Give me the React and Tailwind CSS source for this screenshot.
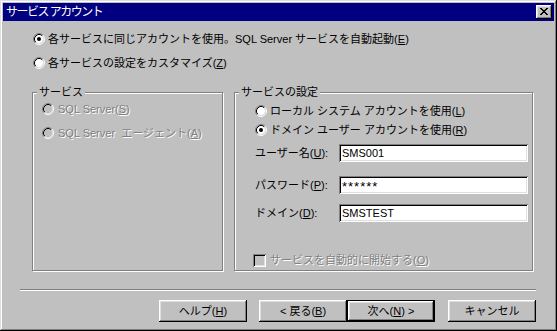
import React from 'react';

const raised = 'shadow-[inset_-1px_-1px_0_#000,inset_1px_1px_0_#fff,inset_-2px_-2px_0_#808080,inset_2px_2px_0_#dfdfdf]';
const sunken = 'shadow-[inset_1px_1px_0_#808080,inset_-1px_-1px_0_#fff,inset_2px_2px_0_#000,inset_-2px_-2px_0_#dfdfdf]';
const etched = 'border border-[#808080] shadow-[inset_1px_1px_0_#fff,1px_1px_0_#fff]';
const dim = 'text-[#808080] [text-shadow:1px_1px_0_#fff]';

const Radio = ({ checked, disabled }) => (
    <svg width="12" height="12" viewBox="0 0 12 12" className="shrink-0">
        <circle cx="6" cy="6" r="4.2" fill={disabled ? '#c0c0c0' : '#fff'} />
        <path d="M2.11 9.89A5.5 5.5 0 0 1 9.89 2.11" stroke="#808080" fill="none" />
        <path d="M9.89 2.11A5.5 5.5 0 0 1 2.11 9.89" stroke="#fff" fill="none" />
        <path d="M2.82 9.18A4.5 4.5 0 0 1 9.18 2.82" stroke="#000" fill="none" />
        <path d="M9.18 2.82A4.5 4.5 0 0 1 2.82 9.18" stroke="#dfdfdf" fill="none" />
        {checked && <circle cx="6" cy="6" r="2" fill={disabled ? '#808080' : '#000'} />}
    </svg>
);

// mnemonic letter
const K = ({ children }) => <span className="underline underline-offset-[1px]">{children}</span>;

const Group = ({ title, className, children }) => (
    <div className={`relative h-[179px] ${etched} ${className}`}>
        <span className="absolute left-[4px] top-[-8px] px-[2px] bg-[#c0c0c0] leading-[14px]">{title}</span>
        {children}
    </div>
);

const Field = ({ label, value, secret, className }) => (
    <div className={`flex items-center ${className}`}>
        <span className="w-[84px] leading-[14px]">{label}</span>
        <div className={`w-[189px] h-[18px] bg-white pl-[3px] flex items-center font-['Liberation_Sans',sans-serif] ${sunken} ${secret ? 'text-[13px] tracking-[1px] pt-[3px]' : 'text-[11px]'}`}>
            {value}
        </div>
    </div>
);

const Button = ({ children, isDefault, className }) => (
    <button className={`w-[88px] h-[22px] flex items-center justify-center bg-[#c0c0c0] leading-[14px] ${raised} ${isDefault ? 'border border-black' : ''} ${className}`}>
        {children}
    </button>
);

export default function App() {
    return (
        <div className="w-[557px] h-[331px] bg-[#c0c0c0] p-[3px] flex flex-col text-[11px] text-black font-['Liberation_Sans','Noto_Sans_CJK_JP',sans-serif] shadow-[inset_-1px_-1px_0_#000,inset_1px_1px_0_#dfdfdf,inset_-2px_-2px_0_#808080,inset_2px_2px_0_#fff]">
            {/* Title bar */}
            <div className="h-[18px] bg-[#000080] flex items-center justify-between pl-[3px] shrink-0">
                <span className="text-white text-[12px] tracking-[-1.5px] leading-[18px]">サービス アカウント</span>
                <div className={`w-[16px] h-[14px] mr-[2px] bg-[#c0c0c0] flex items-center justify-center ${raised}`}>
                    <svg width="8" height="7" viewBox="0 0 8 7" shapeRendering="crispEdges" className="-ml-[1px] -mt-[1px]">
                        <path d="M0 0h2v1H0zM6 0h2v1H6zM1 1h2v1H1zM5 1h2v1H5zM2 2h4v1H2zM3 3h2v1H3zM2 4h4v1H2zM1 5h2v1H1zM5 5h2v1H5zM0 6h2v1H0zM6 6h2v1H6z" fill="#000" />
                    </svg>
                </div>
            </div>

            {/* Top options */}
            <div className="flex items-center h-[14px] mt-[11px] ml-[30px]">
                <Radio checked />
                <span className="ml-[3px] leading-[14px]">各サービスに同じアカウントを使用。SQL Server サービスを自動起動(<K>E</K>)</span>
            </div>
            <div className="flex items-center h-[14px] mt-[10px] ml-[30px]">
                <Radio />
                <span className="ml-[3px] leading-[14px]">各サービスの設定をカスタマイズ(<K>Z</K>)</span>
            </div>

            {/* Group boxes */}
            <div className="flex mt-[22px] ml-[29px]">
                <Group title="サービス" className="w-[191px] pl-[9px] pt-[9px]">
                    <div className="flex items-center h-[14px]">
                        <Radio disabled />
                        <span className={`ml-[4px] leading-[14px] ${dim}`}>SQL Server(<K>S</K>)</span>
                    </div>
                    <div className="flex items-center h-[14px] mt-[10px]">
                        <Radio disabled />
                        <span className={`ml-[4px] leading-[14px] ${dim}`}>SQL Server&nbsp; エージェント(<K>A</K>)</span>
                    </div>
                </Group>

                <Group title="サービスの設定" className="w-[299px] ml-[11px] pl-[20px] pt-[11px]">
                    <div className="flex items-center h-[14px]">
                        <Radio />
                        <span className="ml-[3px] leading-[14px]">ローカル システム アカウントを使用(<K>L</K>)</span>
                    </div>
                    <div className="flex items-center h-[14px] mt-[5px]">
                        <Radio checked />
                        <span className="ml-[3px] leading-[14px]">ドメイン ユーザー アカウントを使用(<K>R</K>)</span>
                    </div>
                    <Field className="mt-[7px]" label={<>ユーザー名(<K>U</K>):</>} value="SMS001" />
                    <Field className="mt-[14px]" label={<>パスワード(<K>P</K>):</>} value="******" secret />
                    <Field className="mt-[10px]" label={<>ドメイン(<K>D</K>):</>} value="SMSTEST" />
                    <div className="flex items-center h-[14px] mt-[31px] -ml-[2px]">
                        <div className={`w-[13px] h-[13px] bg-[#c0c0c0] ${sunken}`} />
                        <span className={`ml-[4px] leading-[14px] ${dim}`}>サービスを自動的に開始する(<K>O</K>)</span>
                    </div>
                </Group>
            </div>

            {/* Separator */}
            <div className="mt-[18px] ml-[17px] w-[516px] h-[2px] border-t border-t-[#808080] border-b border-b-white" />

            {/* Buttons */}
            <div className="flex justify-end pr-[18px] mt-[9px]">
                <Button>ヘルプ(<K>H</K>)</Button>
                <Button className="ml-[12px]">&lt; 戻る(<K>B</K>)</Button>
                <Button isDefault>次へ(<K>N</K>) &gt;</Button>
                <Button className="ml-[13px]">キャンセル</Button>
            </div>
        </div>
    );
}
